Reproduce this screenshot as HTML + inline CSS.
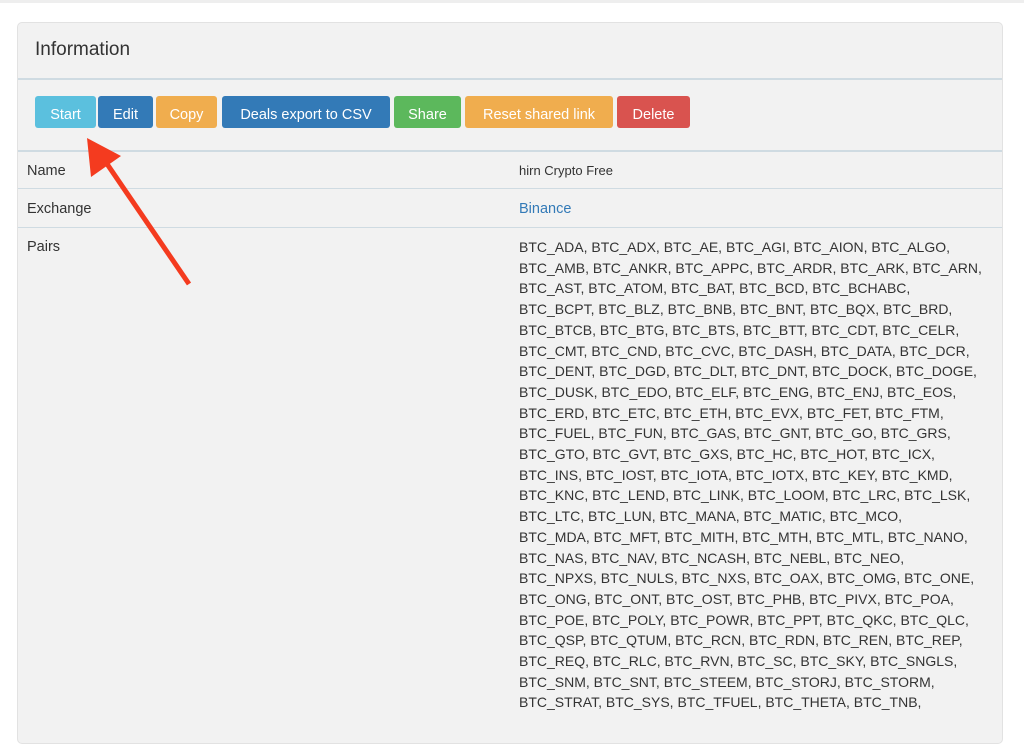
<!DOCTYPE html>
<html><head><style>
body{margin:0;width:1024px;height:716px;overflow:hidden;background:#fff;font-family:"Liberation Sans",sans-serif;color:#333;position:relative}
.top{position:absolute;left:0;top:0;width:1024px;height:3px;background:#eee}
.panel{position:absolute;left:17px;top:22px;width:984px;height:720px;background:#f2f2f2;border:1px solid #e2e2e2;border-radius:5px}
.h{position:absolute;left:17px;top:16px;font-size:19px;color:#333}
.hr{position:absolute;left:0;width:984px;height:1px;background:#cfdbe2}
.btn{position:absolute;top:73px;height:32px;box-sizing:border-box;padding-top:5px;display:flex;align-items:center;justify-content:center;color:#fff;font-size:14.5px;border-radius:3px}
.lab{position:absolute;left:9px;font-size:14.5px}
.val{position:absolute;left:501px;font-size:14px;line-height:20.7px;white-space:nowrap}
</style></head><body>
<div class="top"></div>
<div class="panel">
<div class="h">Information</div>
<div class="hr" style="top:55px;height:2px"></div>
<div class="btn" style="left:17px;width:61px;background:#5bc0de">Start</div>
<div class="btn" style="left:80px;width:55px;background:#337ab7">Edit</div>
<div class="btn" style="left:138px;width:61px;background:#f0ad4e">Copy</div>
<div class="btn" style="left:204px;width:168px;background:#337ab7">Deals export to CSV</div>
<div class="btn" style="left:376px;width:67px;background:#5cb85c">Share</div>
<div class="btn" style="left:447px;width:148px;background:#f0ad4e">Reset shared link</div>
<div class="btn" style="left:599px;width:73px;background:#d9534f">Delete</div>
<div class="hr" style="top:127px;height:2px"></div>
<div class="lab" style="top:140px">Name</div><div class="val" style="top:138px;font-size:13px">hirn Crypto Free</div>
<div class="hr" style="top:165px"></div>
<div class="lab" style="top:178px">Exchange</div><div class="val" style="top:176px;color:#337ab7;font-size:14.5px">Binance</div>
<div class="hr" style="top:204px"></div>
<div class="lab" style="top:216px">Pairs</div>
<div class="val" style="top:214px">BTC_ADA, BTC_ADX, BTC_AE, BTC_AGI, BTC_AION, BTC_ALGO,<br>BTC_AMB, BTC_ANKR, BTC_APPC, BTC_ARDR, BTC_ARK, BTC_ARN,<br>BTC_AST, BTC_ATOM, BTC_BAT, BTC_BCD, BTC_BCHABC,<br>BTC_BCPT, BTC_BLZ, BTC_BNB, BTC_BNT, BTC_BQX, BTC_BRD,<br>BTC_BTCB, BTC_BTG, BTC_BTS, BTC_BTT, BTC_CDT, BTC_CELR,<br>BTC_CMT, BTC_CND, BTC_CVC, BTC_DASH, BTC_DATA, BTC_DCR,<br>BTC_DENT, BTC_DGD, BTC_DLT, BTC_DNT, BTC_DOCK, BTC_DOGE,<br>BTC_DUSK, BTC_EDO, BTC_ELF, BTC_ENG, BTC_ENJ, BTC_EOS,<br>BTC_ERD, BTC_ETC, BTC_ETH, BTC_EVX, BTC_FET, BTC_FTM,<br>BTC_FUEL, BTC_FUN, BTC_GAS, BTC_GNT, BTC_GO, BTC_GRS,<br>BTC_GTO, BTC_GVT, BTC_GXS, BTC_HC, BTC_HOT, BTC_ICX,<br>BTC_INS, BTC_IOST, BTC_IOTA, BTC_IOTX, BTC_KEY, BTC_KMD,<br>BTC_KNC, BTC_LEND, BTC_LINK, BTC_LOOM, BTC_LRC, BTC_LSK,<br>BTC_LTC, BTC_LUN, BTC_MANA, BTC_MATIC, BTC_MCO,<br>BTC_MDA, BTC_MFT, BTC_MITH, BTC_MTH, BTC_MTL, BTC_NANO,<br>BTC_NAS, BTC_NAV, BTC_NCASH, BTC_NEBL, BTC_NEO,<br>BTC_NPXS, BTC_NULS, BTC_NXS, BTC_OAX, BTC_OMG, BTC_ONE,<br>BTC_ONG, BTC_ONT, BTC_OST, BTC_PHB, BTC_PIVX, BTC_POA,<br>BTC_POE, BTC_POLY, BTC_POWR, BTC_PPT, BTC_QKC, BTC_QLC,<br>BTC_QSP, BTC_QTUM, BTC_RCN, BTC_RDN, BTC_REN, BTC_REP,<br>BTC_REQ, BTC_RLC, BTC_RVN, BTC_SC, BTC_SKY, BTC_SNGLS,<br>BTC_SNM, BTC_SNT, BTC_STEEM, BTC_STORJ, BTC_STORM,<br>BTC_STRAT, BTC_SYS, BTC_TFUEL, BTC_THETA, BTC_TNB,</div>
</div>
<svg style="position:absolute;left:0;top:0" width="1024" height="716">
<line x1="189" y1="284" x2="103" y2="158" stroke="#f43b1f" stroke-width="5"/>
<polygon points="87,138 91,177 121,156" fill="#f43b1f"/>
</svg>
</body></html>
